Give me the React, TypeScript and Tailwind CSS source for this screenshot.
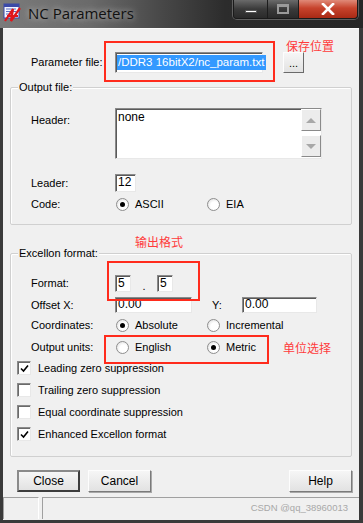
import React from 'react';

const Sunken: React.FC<{ className?: string; children?: React.ReactNode }> = ({ className = '', children }) => (
  <div
    className={`bg-white border border-t-[#8a8a8a] border-l-[#8a8a8a] border-r-[#e8e8e8] border-b-[#e8e8e8] shadow-[inset_1px_1px_0_#5a5a5a] ${className}`}
  >
    {children}
  </div>
);

const Radio: React.FC<{ checked?: boolean; label: string; className?: string }> = ({ checked, label, className = '' }) => (
  <div className={`flex items-center ${className}`}>
    <span className="w-[13px] h-[13px] rounded-full border border-[#8e8e8e] bg-[radial-gradient(circle_at_60%_60%,#ffffff_40%,#d6d6d6_100%)] flex items-center justify-center">
      {checked && <span className="w-[5px] h-[5px] rounded-full bg-black" />}
    </span>
    <span className="ml-[6px]">{label}</span>
  </div>
);

const Check: React.FC<{ checked?: boolean; label: string }> = ({ checked, label }) => (
  <div className="flex items-center h-[22px]">
    <span className="w-[14px] h-[14px] bg-white border border-t-[#8a8a8a] border-l-[#8a8a8a] border-r-[#e8e8e8] border-b-[#e8e8e8] shadow-[inset_1px_1px_0_#6a6a6a] flex items-center justify-center">
      {checked && (
        <svg width="9" height="9" viewBox="0 0 9 9">
          <path d="M1 4.5 L3.5 7 L8 1.5" fill="none" stroke="#000" strokeWidth="1.6" />
        </svg>
      )}
    </span>
    <span className="ml-[7px]">{label}</span>
  </div>
);

const Btn: React.FC<{ label: string; primary?: boolean }> = ({ label, primary }) => (
  <button
    className={`w-[63px] h-[22px] bg-[linear-gradient(#f6f6f6,#e2e2e2)] text-[12px] ${
      primary
        ? 'border-2 border-[#3d3d3d] border-t-[#8a8a8a] border-l-[#8a8a8a]'
        : 'border border-t-[#fdfdfd] border-l-[#fdfdfd] border-r-[#7a7a7a] border-b-[#7a7a7a] shadow-[1px_1px_0_#a8a8a8]'
    }`}
  >
    {label}
  </button>
);

const Group: React.FC<{ title: string; className?: string; children: React.ReactNode }> = ({ title, className = '', children }) => (
  <div className={`relative mx-[7px] border border-[#d0d0d0] rounded-[2px] shadow-[inset_1px_1px_0_#ffffff] ${className}`}>
    <span className="absolute -top-[8px] left-[7px] bg-[#f0f0f0] px-[1px] leading-[14px]">{title}</span>
    {children}
  </div>
);

const AppIcon = () => (
  <svg width="20" height="19" viewBox="0 0 20 19">
    <rect x="1" y="1" width="15" height="14" fill="#f4f6ff" stroke="#3b4aa8" strokeWidth="1" />
    <rect x="1" y="1" width="15" height="3" fill="#3b4aa8" />
    <path d="M3 6h10M3 8.5h10M3 11h7" stroke="#5d6cc0" strokeWidth="1" />
    <path d="M2 18 L10 6 L8 18 L17 5 M4 13 L15 13" stroke="#e0161b" strokeWidth="2.2" fill="none" />
  </svg>
);

const TitleBar = () => (
  <div className="h-[28px] flex items-start bg-[linear-gradient(90deg,#7b7b7b_0%,#6a6a6a_25%,#474747_45%,#2c2c2c_62%,#262626_100%)]">
    <div className="mt-[3px] ml-[3px]">
      <AppIcon />
    </div>
    <span className="ml-[5px] mt-[3px] text-[15px] leading-[20px] text-[#111] font-['Open_Sans','Noto_Sans',sans-serif] [text-shadow:0_0_6px_rgba(220,220,220,0.9)]">
      NC Parameters
    </span>
    <div className="ml-auto mr-[5px] flex h-[19px] rounded-b-[4px] overflow-hidden border border-t-0 border-[#1a1a1a] shadow-[0_0_0_1px_rgba(255,255,255,0.25)]">
      <div className="w-[34px] bg-[linear-gradient(#6a6a6a,#3a3a3a_50%,#2a2a2a)] border-r border-[#1c1c1c] flex items-center justify-center">
        <span className="mt-[5px] w-[12px] h-[3px] bg-white border border-[#555]" />
      </div>
      <div className="w-[31px] bg-[linear-gradient(#6a6a6a,#3a3a3a_50%,#2a2a2a)] border-r border-[#1c1c1c] flex items-center justify-center">
        <span className="w-[12px] h-[10px] border-2 border-[#9a9a9a] border-t-[3px]" />
      </div>
      <div className="w-[58px] bg-[linear-gradient(#e08a78,#c7432c_45%,#a82a15)] flex items-center justify-center">
        <svg width="14" height="12" viewBox="0 0 14 12">
          <path d="M2 1 L12 11 M12 1 L2 11" stroke="#ffffff" strokeWidth="2.6" strokeLinecap="square" />
        </svg>
      </div>
    </div>
  </div>
);

const App: React.FC = () => {
  return (
    <div className="relative w-[363px] h-[523px] bg-[#3a3a3a] flex flex-col font-['Liberation_Sans',Arial,sans-serif] text-[11px] text-black overflow-hidden">
      <TitleBar />

      <div className="flex-1 ml-[3px] mr-[4px] mb-[3px] bg-[#f0f0f0] flex flex-col border-t border-[#fafafa]">
        {/* Parameter file */}
        <div className="mt-[23px] h-[21px] flex items-center pl-[28px]">
          <span className="w-[84px]">Parameter file:</span>
          <Sunken className="w-[148px] h-[21px] flex items-center pl-[1px]">
            <span className="whitespace-nowrap bg-[#3399ff] text-white text-[11.5px] leading-[15px] pl-[1px] pr-[2px]">
              /DDR3 16bitX2/nc_param.txt
            </span>
          </Sunken>
          <button className="ml-[20px] w-[21px] h-[21px] bg-[linear-gradient(#f6f6f6,#e2e2e2)] border border-t-[#fdfdfd] border-l-[#fdfdfd] border-r-[#6a6a6a] border-b-[#6a6a6a] leading-[14px] text-[11px]">
            ...
          </button>
        </div>

        {/* Output file */}
        <Group title="Output file:" className="mt-[14px] h-[138px] pl-[20px] pt-[20px]">
          <div className="flex items-start">
            <span className="w-[84px] mt-[4px]">Header:</span>
            <Sunken className="w-[207px] h-[51px] flex">
              <span className="flex-1 pl-[2px] text-[12px] leading-[15px] pt-[1px]">none</span>
              <div className="w-[20px] flex flex-col justify-between pb-[1px]">
                <div className="h-[22px] bg-[#ececec] border border-t-white border-l-white border-r-[#8a8a8a] border-b-[#8a8a8a] flex items-center justify-center">
                  <span className="w-0 h-0 border-x-[5px] border-x-transparent border-b-[5px] border-b-[#a8a8a8]" />
                </div>
                <div className="h-[22px] bg-[#ececec] border border-t-white border-l-white border-r-[#8a8a8a] border-b-[#8a8a8a] flex items-center justify-center">
                  <span className="w-0 h-0 border-x-[5px] border-x-transparent border-t-[5px] border-t-[#a8a8a8]" />
                </div>
              </div>
            </Sunken>
          </div>
          <div className="mt-[15px] h-[18px] flex items-center">
            <span className="w-[84px]">Leader:</span>
            <Sunken className="w-[21px] h-[18px] pl-[2px] text-[12px] leading-[15px]">12</Sunken>
          </div>
          <div className="mt-[5px] h-[14px] flex items-center">
            <span className="w-[85px]">Code:</span>
            <Radio checked label="ASCII" className="w-[91px]" />
            <Radio label="EIA" />
          </div>
        </Group>

        {/* Excellon format */}
        <Group title="Excellon format:" className="mt-[28px] h-[204px] pt-[21px]">
          <div className="pl-[20px]">
            <div className="h-[17px] flex items-center">
              <span className="w-[84px]">Format:</span>
              <Sunken className="w-[16px] h-[17px] pl-[2px] text-[12px] leading-[14px]">5</Sunken>
              <span className="w-[26px] text-center mt-[6px]">.</span>
              <Sunken className="w-[16px] h-[17px] pl-[2px] text-[12px] leading-[14px]">5</Sunken>
            </div>
            <div className="mt-[5px] h-[16px] flex items-center">
              <span className="w-[84px]">Offset X:</span>
              <Sunken className="w-[77px] h-[16px] pl-[2px] text-[12px] leading-[13px]">0.00</Sunken>
              <span className="ml-[20px] w-[30px]">Y:</span>
              <Sunken className="w-[75px] h-[16px] pl-[2px] text-[12px] leading-[13px]">0.00</Sunken>
            </div>
            <div className="mt-[5px] h-[14px] flex items-center">
              <span className="w-[85px]">Coordinates:</span>
              <Radio checked label="Absolute" className="w-[91px]" />
              <Radio label="Incremental" />
            </div>
            <div className="mt-[8px] h-[14px] flex items-center">
              <span className="w-[85px]">Output units:</span>
              <Radio label="English" className="w-[91px]" />
              <Radio checked label="Metric" />
            </div>
          </div>
          <div className="mt-[3px] pl-[6px]">
            <Check checked label="Leading zero suppression" />
            <Check label="Trailing zero suppression" />
            <Check label="Equal coordinate suppression" />
            <Check checked label="Enhanced Excellon format" />
          </div>
        </Group>

        {/* Buttons */}
        <div className="mt-[13px] h-[22px] flex items-center pl-[14px] pr-[7px]">
          <Btn primary label="Close" />
          <div className="ml-[8px]">
            <Btn label="Cancel" />
          </div>
          <div className="ml-auto">
            <Btn label="Help" />
          </div>
        </div>

        {/* Status bar */}
        <div className="mt-[5px] h-[22px] flex gap-[3px]">
          <div className="w-[36px] border-t border-l border-[#a0a0a0] border-r border-r-white" />
          <div className="flex-1 border-t border-l border-[#a0a0a0] flex items-center justify-end pr-[11px] text-[#a8a8a8] text-[9.5px]">
            CSDN @qq_38960013
          </div>
        </div>
      </div>

      {/* Annotations */}
      <div className="absolute left-[104px] top-[41px] w-[171px] h-[41px] border-2 border-[#ff2b1c]" />
      <span className="absolute left-[286px] top-[39px] text-[12px] leading-[14px] text-[#ff3b3b] font-['Noto_Sans_CJK_SC',sans-serif]">
        保存位置
      </span>
      <span className="absolute left-[135px] top-[235px] text-[12px] leading-[14px] text-[#ff3b3b] font-['Noto_Sans_CJK_SC',sans-serif]">
        输出格式
      </span>
      <div className="absolute left-[107px] top-[261px] w-[93px] h-[40px] border-2 border-[#ff2b1c]" />
      <div className="absolute left-[104px] top-[335px] w-[165px] h-[29px] border-2 border-[#ff2b1c]" />
      <span className="absolute left-[283px] top-[341px] text-[12px] leading-[14px] text-[#ff3b3b] font-['Noto_Sans_CJK_SC',sans-serif]">
        单位选择
      </span>
    </div>
  );
};

export default App;
